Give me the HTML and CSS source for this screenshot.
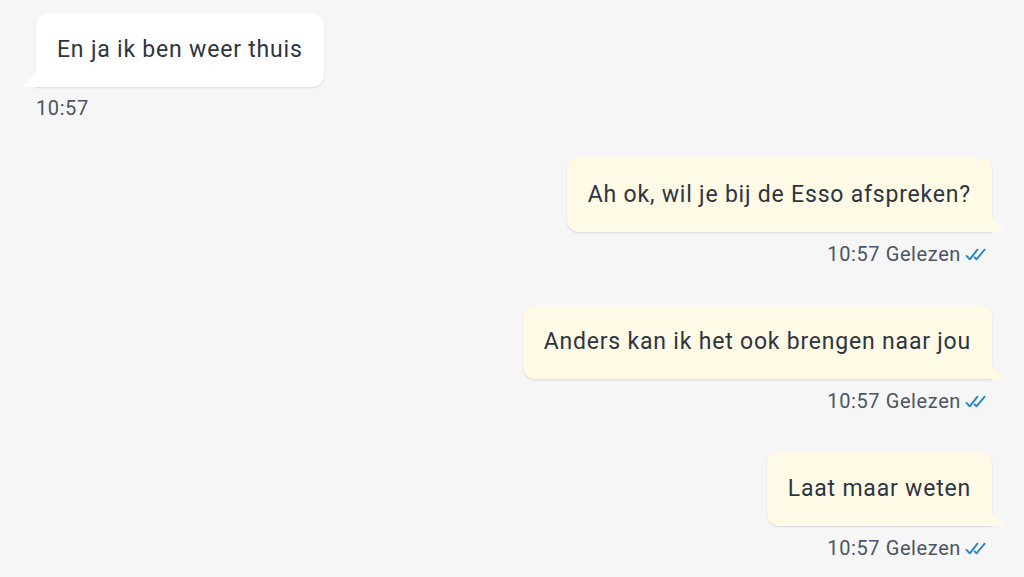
FILE: index.html
```html
<!DOCTYPE html>
<html lang="nl">
<head>
    <meta charset="UTF-8">
    <meta name="viewport" content="width=device-width, initial-scale=1.0">
    <title>Chat</title>
    <link rel="stylesheet" href="styles.css">
</head>
<body>
    <div class="chat">
        <div class="message incoming">
            <div class="bubble">En ja ik ben weer thuis</div>
            <div class="meta">10:57</div>
        </div>

        <div class="message outgoing">
            <div class="bubble">Ah ok, wil je bij de Esso afspreken?</div>
            <div class="meta">10:57 Gelezen
                <svg class="ticks" viewBox="0 0 24 14"><path d="M1.5 8.5 L5 12 L13 2 M10 10 L12 12 L20.5 2"/></svg>
            </div>
        </div>

        <div class="message outgoing">
            <div class="bubble">Anders kan ik het ook brengen naar jou</div>
            <div class="meta">10:57 Gelezen
                <svg class="ticks" viewBox="0 0 24 14"><path d="M1.5 8.5 L5 12 L13 2 M10 10 L12 12 L20.5 2"/></svg>
            </div>
        </div>

        <div class="message outgoing">
            <div class="bubble">Laat maar weten</div>
            <div class="meta">10:57 Gelezen
                <svg class="ticks" viewBox="0 0 24 14"><path d="M1.5 8.5 L5 12 L13 2 M10 10 L12 12 L20.5 2"/></svg>
            </div>
        </div>
    </div>
</body>
</html>
```

FILE: styles.css
```css
* {
    margin: 0;
    padding: 0;
    box-sizing: border-box;
}

body {
    background-color: #f6f6f6;
    font-family: Roboto, "Noto Sans", Arial, sans-serif;
    color: #2d3540;
}

.chat {
    display: flex;
    flex-direction: column;
    padding: 13px 32px 0 36px;
}

.message {
    display: flex;
    flex-direction: column;
    margin-bottom: 38px;
}

.incoming {
    align-items: flex-start;
}

.outgoing {
    align-items: flex-end;
    margin-bottom: 39px;
}

.bubble {
    position: relative;
    font-size: 23px;
    letter-spacing: 0.8px;
    line-height: 30px;
    padding: 22px 21px;
    border-radius: 12px;
    background-color: #ffffff;
    box-shadow: 0 1px 2px rgba(0, 0, 0, 0.12);
}

.incoming .bubble {
    border-bottom-left-radius: 0;
}

.outgoing .bubble {
    background-color: #fefae6;
    border-bottom-right-radius: 0;
}

.bubble::after {
    content: "";
    position: absolute;
    bottom: 0;
    width: 14px;
    height: 14px;
}

.incoming .bubble::after {
    left: -14px;
    background-color: #ffffff;
    clip-path: polygon(100% 0, 0 100%, 100% 100%);
}

.outgoing .bubble::after {
    right: -13px;
    background-color: #fefae6;
    clip-path: polygon(0 0, 100% 100%, 0 100%);
}

.meta {
    display: flex;
    align-items: center;
    gap: 8px;
    margin-top: 9px;
    font-size: 20px;
    letter-spacing: 0.6px;
    line-height: 24px;
    color: #4b5563;
}

.outgoing .meta {
    margin-top: 10px;
    padding-right: 4px;
}

.ticks {
    width: 23px;
    height: 15px;
    fill: none;
    stroke: #2a86c4;
    stroke-width: 2;
    stroke-linecap: round;
    stroke-linejoin: round;
    margin-left: -4px;
}
```
